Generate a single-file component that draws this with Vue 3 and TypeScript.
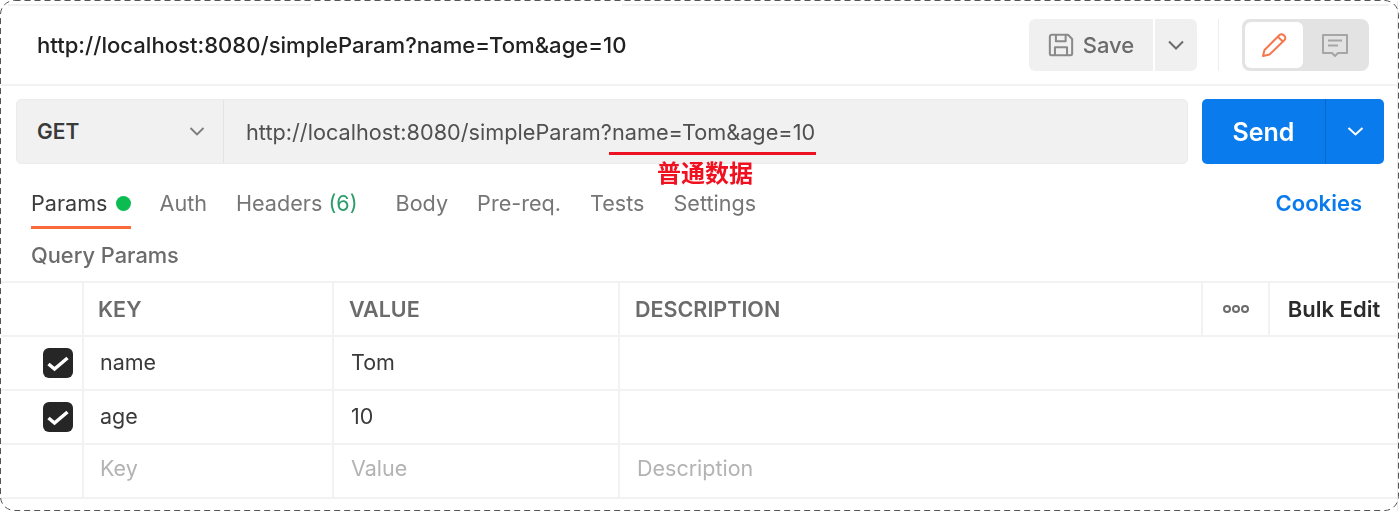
<template>
  <div class="frame">
    <div class="page">
      <!-- Top bar -->
      <header class="top-bar">
        <div class="title">{{ url }}</div>
        <div class="save-group">
          <button class="save-btn">
            <svg width="26" height="24" viewBox="0 0 28 25" fill="none" stroke="#8a8a8a" stroke-width="2.200" stroke-linejoin="round">
              <path d="M2 3.500a2 2 0 0 1 2-2h17.500L26 6v16a1.600 1.600 0 0 1-1.600 1.500H3.600A1.600 1.600 0 0 1 2 22z" />
              <path d="M8.500 1.500v7h10.500v-7" />
              <path d="M7.500 23.500v-8.500h13v8.500" />
            </svg>
            Save
          </button>
          <button class="save-arrow">
            <svg width="18" height="10" viewBox="0 0 18 10" fill="none" stroke="#6b6b6b" stroke-width="2"><path d="M2 1.500l7 7 7-7" /></svg>
          </button>
        </div>
        <div class="top-sep"></div>
        <div class="mode-toggle">
          <div class="mode-item active">
            <svg width="28" height="26" viewBox="0 0 28 26" fill="none" stroke="#f7774d" stroke-width="2" stroke-linejoin="round">
              <path d="M3 24l1.500-6L19.500 3a2.800 2.800 0 0 1 4 0l1 1a2.800 2.800 0 0 1 0 4L9.500 22.500z" />
              <path d="M18 5l5.500 5" />
            </svg>
          </div>
          <div class="mode-item">
            <svg width="28" height="25" viewBox="0 0 28 25" fill="none" stroke="#a6a6a6" stroke-width="2" stroke-linejoin="round">
              <path d="M2 2h24v18h-9l-3 3-3-3H2z" />
              <path d="M7 7.500h14M7 12.500h10" />
            </svg>
          </div>
        </div>
      </header>

      <!-- Request line -->
      <section class="request-row">
        <div class="request-input">
          <div class="method">
            <span>GET</span>
            <svg width="16" height="9" viewBox="0 0 16 9" fill="none" stroke="#7c7c7c" stroke-width="1.800"><path d="M1.500 1l6.500 6.500L14.500 1" /></svg>
          </div>
          <div class="url">{{ url }}</div>
        </div>
        <div class="send">
          <div class="send-label">Send</div>
          <div class="send-arrow">
            <svg width="17" height="9" viewBox="0 0 17 9" fill="none" stroke="#fff" stroke-width="2"><path d="M1.500 1l7 6.500 7-6.500" /></svg>
          </div>
        </div>
        <!-- Annotation drawn over the shot -->
        <div class="mark-line"></div>
        <div class="mark-text">普通数据</div>
      </section>

      <!-- Tabs -->
      <nav class="tabs">
        <div class="tab active">Params <i class="dot"></i></div>
        <div class="tab">Auth</div>
        <div class="tab headers">Headers <span class="count">(6)</span></div>
        <div class="tab">Body</div>
        <div class="tab">Pre-req.</div>
        <div class="tab">Tests</div>
        <div class="tab">Settings</div>
        <div class="cookies">Cookies</div>
      </nav>

      <div class="section-title">Query Params</div>

      <!-- Params table -->
      <div class="table">
        <div class="cell head"></div>
        <div class="cell head label">KEY</div>
        <div class="cell head label">VALUE</div>
        <div class="cell head label">DESCRIPTION</div>
        <div class="cell head more"><i></i><i></i><i></i></div>
        <div class="cell head bulk">Bulk Edit</div>

        <template v-for="row in rows" :key="row.key">
          <div class="cell check">
            <svg width="30" height="30" viewBox="0 0 30 30">
              <rect width="30" height="30" rx="6" fill="#262626" />
              <path d="M5.500 16l6 5L24.500 10" fill="none" stroke="#fff" stroke-width="3.500" />
            </svg>
          </div>
          <div class="cell value">{{ row.key }}</div>
          <div class="cell value next">{{ row.value }}</div>
          <div class="cell wide"></div>
        </template>

        <div class="cell"></div>
        <div class="cell value ghost">Key</div>
        <div class="cell value next ghost">Value</div>
        <div class="cell wide value next ghost">Description</div>
      </div>
    </div>

    <!-- Faint edge of the pasted shot, broken in the middle -->
    <div class="edge edge-left"></div>
    <div class="edge edge-right"></div>

    <!-- Dashed selection outline around the shot -->
    <svg class="outline" width="1399" height="512" viewBox="0 0 1399 512" fill="none">
      <rect x="0.500" y="0.500" width="1398" height="510" rx="14" stroke="#555" stroke-dasharray="6 4" />
    </svg>
  </div>
</template>

<script setup lang="ts">
const url = 'http://localhost:8080/simpleParam?name=Tom&age=10'

const rows = [
  { key: 'name', value: 'Tom' },
  { key: 'age', value: '10' },
]
</script>

<style scoped>
.frame {
  position: relative;
  width: 1399px;
  height: 512px;
  box-sizing: border-box;
  padding: 1px;
  background: #fff;
  overflow: hidden;
  font-family: Inter, "Noto Sans CJK SC", sans-serif;
}

.outline {
  position: absolute;
  left: 0;
  top: 0;
}

.edge {
  position: absolute;
  top: 4px;
  height: 2px;
  background: #f1f1f1;
}

.edge-left {
  left: 8px;
  width: 303px;
}

.edge-right {
  left: 622px;
  right: 10px;
}

.page {
  display: flex;
  flex-direction: column;
  height: 100%;
  box-shadow: inset -1px 0 0 #ececec;
  filter: blur(0.7px);
}

.top-bar {
  display: flex;
  align-items: center;
  height: 85px;
  flex: none;
  box-sizing: border-box;
  padding: 5px 29px 0 36px;
  border-bottom: 2px solid #f2f2f2;
}

.title {
  flex: 1;
  font-size: 22.100px;
  font-weight: 500;
  color: #212121;
}

.save-group {
  display: flex;
  height: 52px;
  gap: 2px;
}

.save-btn,
.save-arrow {
  display: flex;
  align-items: center;
  justify-content: center;
  border: 0;
  background: #f0f0f0;
  font: inherit;
}

.save-btn {
  width: 124px;
  gap: 9px;
  border-radius: 6px 0 0 6px;
  font-size: 22px;
  font-weight: 500;
  color: #6b6b6b;
}

.save-arrow {
  width: 42px;
  border-radius: 0 6px 6px 0;
}

.top-sep {
  width: 1px;
  height: 52px;
  margin: 0 23px 0 21px;
  background: #ededed;
}

.mode-toggle {
  display: flex;
  width: 127px;
  height: 52px;
  box-sizing: border-box;
  padding: 3px;
  border-radius: 8px;
  background: #e3e3e3;
}

.mode-item {
  flex: 1;
  display: flex;
  align-items: center;
  justify-content: center;
  border-radius: 6px;
}

.mode-item.active {
  flex: none;
  width: 58px;
  background: #fff;
}

.request-row {
  position: relative;
  display: flex;
  flex: none;
  gap: 14px;
  height: 65px;
  margin-top: 13px;
  padding: 0 14px 0 15px;
}

.request-input {
  flex: 1;
  display: flex;
  border: 1px solid #ebebeb;
  border-radius: 5px;
  background: #f1f1f1;
}

.method {
  display: flex;
  align-items: center;
  justify-content: space-between;
  width: 207px;
  box-sizing: border-box;
  padding: 0 18px 0 20px;
  border-right: 1px solid #e4e4e4;
  font-size: 21px;
  font-weight: 600;
  color: #3a3a3a;
}

.url {
  display: flex;
  align-items: center;
  padding-left: 22px;
  font-size: 21.700px;
  color: #505050;
}

.send {
  display: flex;
  width: 182px;
  border-radius: 5px;
  background: #097bed;
  color: #fff;
}

.send-label {
  flex: 1;
  display: flex;
  align-items: center;
  justify-content: center;
  border-right: 1px solid #0868c9;
  font-size: 25px;
  font-weight: 600;
}

.send-arrow {
  display: flex;
  align-items: center;
  justify-content: center;
  width: 58px;
}

.mark-line {
  position: absolute;
  left: 608px;
  top: 53px;
  width: 207px;
  height: 3px;
  background: #ee1123;
}

.mark-text {
  position: absolute;
  left: 656px;
  top: 62px;
  font-size: 24px;
  line-height: 26px;
  font-weight: 700;
  color: #f0101f;
}

.tabs {
  display: flex;
  align-items: flex-start;
  flex: none;
  height: 65px;
  padding: 26px 36px 0 30px;
  box-sizing: border-box;
  font-size: 21.600px;
  color: #767676;
}

.tab {
  margin-right: 29px;
  line-height: 27px;
}

.tab.active {
  display: flex;
  align-items: flex-start;
  gap: 8px;
  height: 39px;
  box-sizing: border-box;
  border-bottom: 3px solid #f96b3b;
  color: #3c3c3c;
}

.dot {
  width: 15px;
  height: 15px;
  margin-top: 6px;
  border-radius: 50%;
  background: #0cbb52;
}

.headers {
  margin-right: 38px;
}

.count {
  color: #2a9d6b;
}

.cookies {
  margin-left: auto;
  line-height: 27px;
  font-size: 22px;
  font-weight: 600;
  color: #097bed;
}

.section-title {
  flex: none;
  height: 52px;
  box-sizing: border-box;
  padding-left: 30px;
  font-size: 21.800px;
  font-weight: 500;
  line-height: 52px;
  color: #6b6b6b;
}

.table {
  display: grid;
  grid-template-columns: 83px 250px 286px 583px 67px 1fr;
  grid-auto-rows: 54px;
  border-top: 2px solid #f2f2f2;
  font-size: 21.500px;
}

.cell {
  display: flex;
  align-items: center;
  box-sizing: border-box;
  border-right: 2px solid #f2f2f2;
  border-bottom: 2px solid #f2f2f2;
}

.cell.wide {
  grid-column: span 3;
  border-right: 0;
}

.label {
  padding-left: 14px;
  font-weight: 600;
  color: #6b6b6b;
}

.label + .label {
  padding-left: 15px;
}

.more {
  justify-content: center;
  gap: 1px;
}

.more i {
  width: 8px;
  height: 8px;
  box-sizing: border-box;
  border: 2px solid #6b6b6b;
  border-radius: 50%;
}

.bulk {
  justify-content: center;
  border-right: 0;
  font-size: 22px;
  font-weight: 600;
  color: #2b2b2b;
}

.check {
  justify-content: flex-end;
  padding-right: 9px;
}

.value {
  padding-left: 16px;
  padding-bottom: 2px;
  color: #3a3a3a;
}

.value.next {
  padding-left: 17px;
}

.ghost {
  padding-bottom: 6px;
  color: #b3b3b3;
}
</style>

<style>
html,
body {
  margin: 0;
  background: #fff;
}
</style>
